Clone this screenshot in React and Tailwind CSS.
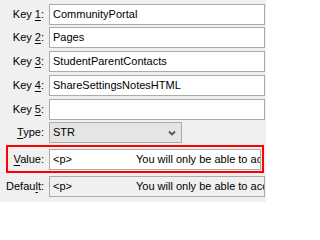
import React from "react";

const font = { fontFamily: '"Liberation Sans", Arial, sans-serif' };

function Label({ pre, mn, post = ":", className = "" }) {
  return (
    <div className={`shrink-0 text-right text-[11px] text-black ${className}`}>
      {pre}
      <span className="underline underline-offset-2">{mn}</span>
      {post}
    </div>
  );
}

function TextBox({ value, gray }) {
  return (
    <div
      className={`flex-1 h-[21px] border border-[#ababab] ${gray ? "bg-[#f0f0f0]" : "bg-white"} flex items-center px-[3px] overflow-hidden whitespace-nowrap text-[11px] text-black`}
    >
      {value}
    </div>
  );
}

function HtmlValue() {
  return (
    <>
      <span>&lt;p&gt;</span>
      <span className="ml-[64px]">You will only be able to access this page</span>
    </>
  );
}

export default function App() {
  const keys = [
    { n: "1", v: "CommunityPortal", mt: "mt-[4px]" },
    { n: "2", v: "Pages", mt: "mt-[2px]" },
    { n: "3", v: "StudentParentContacts", mt: "mt-[3px]" },
    { n: "4", v: "ShareSettingsNotesHTML", mt: "mt-[3px]" },
    { n: "5", v: "", mt: "mt-[3px]" },
  ];

  return (
    <div className="w-[266px] h-[202px] bg-[#f0f0f0] overflow-hidden" style={font}>
      {keys.map((k) => (
        <div key={k.n} className={`flex items-center gap-[5px] pr-[1px] ${k.mt}`}>
          <Label pre="Key " mn={k.n} className="w-[44px]" />
          <TextBox value={k.v} />
        </div>
      ))}

      {/* Type */}
      <div className="flex items-center gap-[5px] mt-[2px]">
        <Label pre="" mn="T" post="ype:" className="w-[44px]" />
        <div className="w-[133px] h-[21px] border border-[#acacac] bg-[#e5e5e5] flex items-center justify-between pl-[3px] pr-[5px] text-[11px] text-black">
          <span>STR</span>
          <svg width="8" height="6" viewBox="0 0 8 6">
            <path d="M1 1.5 L4 4.5 L7 1.5" fill="none" stroke="#555" strokeWidth="1.8" />
          </svg>
        </div>
      </div>

      {/* Value, highlighted */}
      <div className="ml-[6px] mt-[2px] w-[258px] h-[28px] border-2 border-[#ff0000] flex items-center gap-[5px] pr-[1px]">
        <Label pre="" mn="V" post="alue:" className="w-[36px]" />
        <TextBox value={<HtmlValue />} />
      </div>

      {/* Default */}
      <div className="flex items-center gap-[5px] pr-[1px] mt-[3px]">
        <Label pre="Defau" mn="l" post="t:" className="w-[44px]" />
        <TextBox value={<HtmlValue />} gray />
      </div>
    </div>
  );
}
